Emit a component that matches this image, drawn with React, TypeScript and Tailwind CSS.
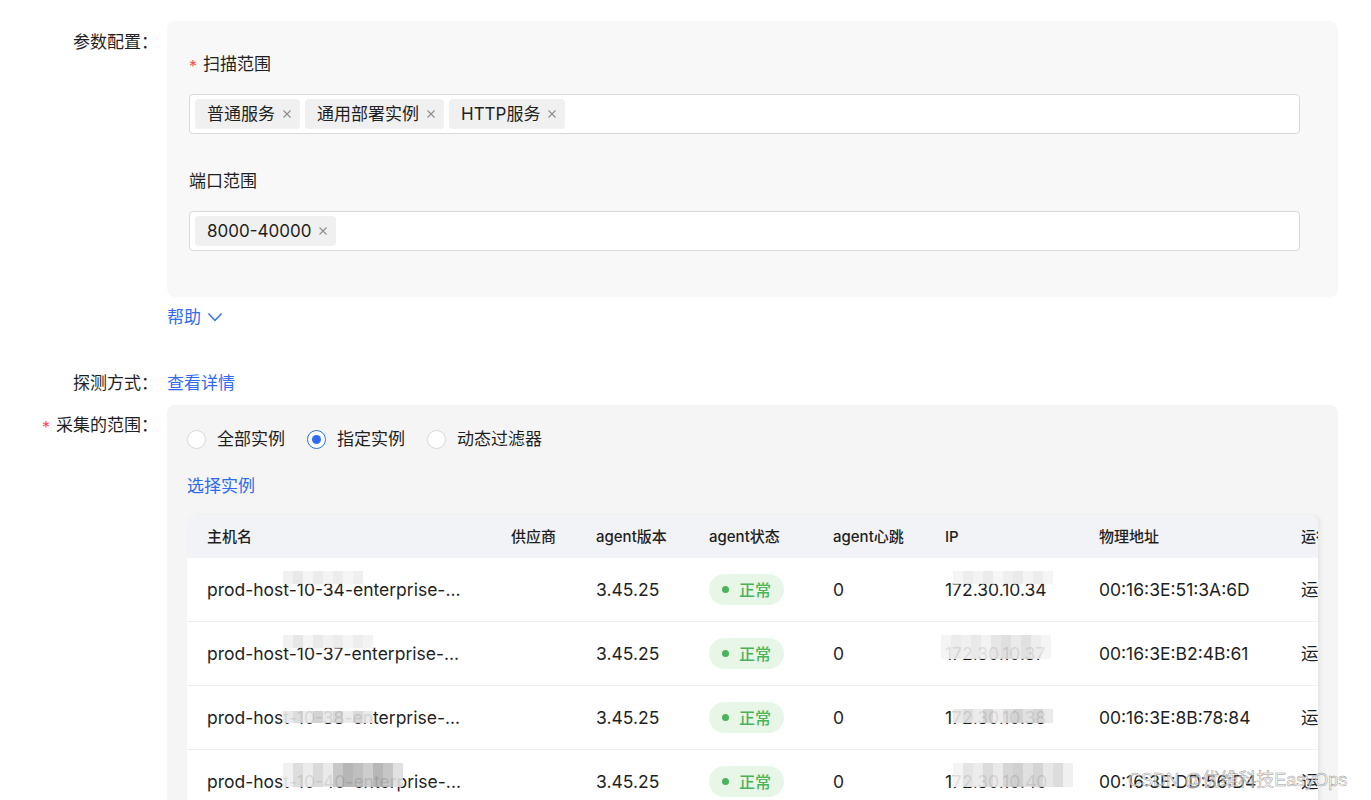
import { type ReactNode } from "react";

const FONT = "font-['Inter','Noto_Sans_CJK_SC',sans-serif]";

function Tag({ children }: { children: ReactNode }) {
  return (
    <span className="inline-flex h-[30px] items-center gap-[7px] rounded-[4px] bg-[#f0f0f0] pl-[12px] pr-[8px] text-[17px] text-[#1f1f1f]">
      {children}
      <svg width="10" height="10" viewBox="0 0 10 10" className="text-[#8c8c8c]">
        <path d="M1.5 1.5L8.5 8.5M8.5 1.5L1.5 8.5" stroke="currentColor" strokeWidth="1.1" />
      </svg>
    </span>
  );
}

function TagInput({ tags }: { tags: string[] }) {
  return (
    <div className="flex h-[40px] items-center gap-[5px] rounded-[4px] border border-[#d9d9d9] bg-white px-[5px]">
      {tags.map((t) => (
        <Tag key={t}>{t}</Tag>
      ))}
    </div>
  );
}

function Radio({ label, checked = false }: { label: string; checked?: boolean }) {
  return (
    <span className="inline-flex items-center gap-[11px] text-[17px] text-[#1f1f1f]">
      <span
        className={`flex h-[19px] w-[19px] items-center justify-center rounded-full border bg-white ${
          checked ? "border-[#2f6bf0]" : "border-[#d9d9d9]"
        }`}
      >
        {checked && <span className="h-[9px] w-[9px] rounded-full bg-[#2f6bf0]" />}
      </span>
      {label}
    </span>
  );
}

function Mosaic({ cells, className }: { cells: string[]; className: string }) {
  return (
    <span className={`absolute flex opacity-90 ${className}`}>
      {cells.map((c, i) => (
        <span key={i} className={`h-full w-[10px] ${c}`} />
      ))}
    </span>
  );
}

function Status() {
  return (
    <span className="inline-flex h-[31px] items-center gap-[10px] rounded-full bg-[#e8f6e8] px-[13px] text-[16px] font-medium text-[#4bb35a]">
      <span className="h-[7px] w-[7px] rounded-full bg-[#4bb35a]" />
      正常
    </span>
  );
}

const rows = [
  {
    host: "prod-host-10-34-enterprise-...",
    ip: "172.30.10.34",
    mac: "00:16:3E:51:3A:6D",
    hostCells: ["bg-[#f0f0f0]", "bg-[#e6e6e6]", "bg-[#f5f5f5]", "bg-[#eaeaea]", "bg-[#f3f3f3]", "bg-[#ececec]", "bg-[#f6f6f6]", "bg-[#eeeeee]"],
    hostPos: "left-[76px] top-[-8px] h-[13px]",
    ipCells: ["bg-[#f5f5f5]", "bg-[#ececec]", "bg-[#f2f2f2]", "bg-[#e9e9e9]", "bg-[#f6f6f6]", "bg-[#eeeeee]", "bg-[#e8e8e8]", "bg-[#f3f3f3]", "bg-[#ececec]", "bg-[#f4f4f4]"],
    ipPos: "left-[8px] top-[-8px] h-[13px]",
  },
  {
    host: "prod-host-10-37-enterprise-...",
    ip: "172.30.10.37",
    mac: "00:16:3E:B2:4B:61",
    hostCells: ["bg-[#f0f0f0]", "bg-[#e4e4e4]", "bg-[#f4f4f4]", "bg-[#e8e8e8]", "bg-[#f1f1f1]", "bg-[#eaeaea]", "bg-[#f5f5f5]", "bg-[#ececec]", "bg-[#f2f2f2]"],
    hostPos: "left-[76px] top-[-8px] h-[13px]",
    ipCells: ["bg-[#f3f3f3]", "bg-[#eaeaea]", "bg-[#efefef]", "bg-[#e7e7e7]", "bg-[#f2f2f2]", "bg-[#e4e4e4]", "bg-[#dcdcdc]", "bg-[#e8e8e8]", "bg-[#dedede]", "bg-[#ececec]", "bg-[#f4f4f4]"],
    ipPos: "left-[-4px] top-[-8px] h-[24px]",
  },
  {
    host: "prod-host-10-38-enterprise-...",
    ip: "172.30.10.38",
    mac: "00:16:3E:8B:78:84",
    hostCells: ["bg-[#e8e8e8]", "bg-[#dadada]", "bg-[#ebebeb]", "bg-[#cfcfcf]", "bg-[#e6e6e6]", "bg-[#d4d4d4]", "bg-[#eaeaea]", "bg-[#d6d6d6]", "bg-[#e8e8e8]"],
    hostPos: "left-[76px] top-[4px] h-[12px]",
    ipCells: ["bg-[#e8e8e8]", "bg-[#dcdcdc]", "bg-[#ebebeb]", "bg-[#d4d4d4]", "bg-[#ececec]", "bg-[#dadada]", "bg-[#cecece]", "bg-[#dfdfdf]", "bg-[#d2d2d2]", "bg-[#e8e8e8]"],
    ipPos: "left-[8px] top-[2px] h-[14px]",
  },
  {
    host: "prod-host-10-40-enterprise-...",
    ip: "172.30.10.40",
    mac: "00:16:3E:DD:56:D4",
    hostCells: ["bg-[#f0f0f0]", "bg-[#dadada]", "bg-[#ebebeb]", "bg-[#d6d6d6]", "bg-[#e8e8e8]", "bg-[#c2c2c2]", "bg-[#afafaf]", "bg-[#b9b9b9]", "bg-[#c8c8c8]", "bg-[#b0b0b0]", "bg-[#c0c0c0]", "bg-[#dedede]"],
    hostPos: "left-[76px] top-[-8px] h-[24px]",
    ipCells: ["bg-[#f3f3f3]", "bg-[#e2e2e2]", "bg-[#ebebeb]", "bg-[#d8d8d8]", "bg-[#e8e8e8]", "bg-[#d2d2d2]", "bg-[#cbcbcb]", "bg-[#dddddd]", "bg-[#d0d0d0]", "bg-[#e5e5e5]", "bg-[#dadada]", "bg-[#efefef]"],
    ipPos: "left-[8px] top-[-8px] h-[24px]",
  },
  {
    host: "prod-host-10-41-enterprise-...",
    ip: "172.30.10.41",
    mac: "00:16:3E:4A:19:C2",
    hostCells: ["bg-[#ebebeb]", "bg-[#e0e0e0]", "bg-[#e7e7e7]", "bg-[#dcdcdc]", "bg-[#e8e8e8]", "bg-[#e1e1e1]", "bg-[#ebebeb]", "bg-[#e4e4e4]"],
    hostPos: "left-[76px] top-[-6px] h-[18px]",
    ipCells: ["bg-[#ececec]", "bg-[#e1e1e1]", "bg-[#e8e8e8]", "bg-[#dcdcdc]", "bg-[#e6e6e6]", "bg-[#dddddd]", "bg-[#e9e9e9]", "bg-[#e2e2e2]", "bg-[#ebebeb]", "bg-[#e5e5e5]"],
    ipPos: "left-[8px] top-[-6px] h-[18px]",
  },
];

const cols = "grid grid-cols-[304px_85px_113px_124px_112px_154px_202px_120px]";

function HostTable() {
  return (
    <div className="relative w-[1131px] overflow-hidden rounded-t-[8px] shadow-[3px_0_5px_-1px_rgba(0,0,0,0.08)]">
      <div className="w-[1214px]">
        <div className={`${cols} h-[43px] items-center bg-[#f1f3f6] text-[15px] font-medium text-[#1f1f1f]`}>
          <div className="pl-[20px]">主机名</div>
          <div className="pl-[20px]">供应商</div>
          <div className="pl-[20px]">agent版本</div>
          <div className="pl-[20px]">agent状态</div>
          <div className="pl-[20px]">agent心跳</div>
          <div className="pl-[20px]">IP</div>
          <div className="pl-[20px]">物理地址</div>
          <div className="pl-[20px]">运行状态</div>
        </div>
        {rows.map((r) => (
          <div
            key={r.mac}
            className={`${cols} h-[64px] items-center border-b border-[#f0f0f0] bg-white text-[17.5px] text-[#1f1f1f]`}
          >
            <div className="relative pl-[20px]">
              <span className="relative">
                {r.host}
                <Mosaic cells={r.hostCells} className={r.hostPos} />
              </span>
            </div>
            <div />
            <div className="pl-[20px]">3.45.25</div>
            <div className="pl-[20px]">
              <Status />
            </div>
            <div className="pl-[20px]">0</div>
            <div className="pl-[20px]">
              <span className="relative">
                {r.ip}
                <Mosaic cells={r.ipCells} className={r.ipPos} />
              </span>
            </div>
            <div className="pl-[20px]">{r.mac}</div>
            <div className="pl-[20px]">运行中</div>
          </div>
        ))}
      </div>
    </div>
  );
}

export default function App() {
  return (
    <div className={`relative h-[800px] overflow-hidden bg-white ${FONT} text-[17px] leading-[24px] text-[#1f1f1f]`}>
      <div className="grid grid-cols-[158px_1fr] gap-x-[9px] pr-[33px] pt-[21px]">
        {/* 参数配置 */}
        <div className="pt-[9px] text-right">参数配置：</div>
        <div className="rounded-[8px] bg-[#f8f8f8] pl-[22px] pr-[38px] pb-[46px] pt-[31px]">
          <div className="flex h-[24px] items-center gap-[6px]">
            <span className="relative top-[2px] text-[16px] leading-[24px] text-[#ff4d4f]">*</span>
            <span>扫描范围</span>
          </div>
          <div className="mt-[18px]">
            <TagInput tags={["普通服务", "通用部署实例", "HTTP服务"]} />
          </div>
          <div className="mt-[35px]">端口范围</div>
          <div className="mt-[18px]">
            <TagInput tags={["8000-40000"]} />
          </div>
        </div>

        <div />
        <div className="mt-[8px] flex h-[24px] items-center gap-[6px] text-[#2f6bf0]">
          帮助
          <svg width="16" height="12" viewBox="0 0 16 12">
            <path d="M1.5 2.5L8 9.5L14.5 2.5" fill="none" stroke="currentColor" strokeWidth="1.4" />
          </svg>
        </div>

        {/* 探测方式 */}
        <div className="mt-[42px] text-right">探测方式：</div>
        <div className="mt-[42px] text-[#2f6bf0]">查看详情</div>

        {/* 采集的范围 */}
        <div className="mt-[10px] flex h-[32px] items-end justify-end gap-[6px]">
          <span className="relative top-[2px] text-[16px] leading-[24px] text-[#ff4d4f]">*</span>
          <span>采集的范围：</span>
        </div>
        <div className="mt-[10px] rounded-t-[8px] bg-[#f5f5f6] pl-[20px] pr-[20px] pt-[22px] pb-[40px]">
          <div className="flex h-[24px] items-center gap-[22px]">
            <Radio label="全部实例" />
            <Radio label="指定实例" checked />
            <Radio label="动态过滤器" />
          </div>
          <div className="mt-[23px] text-[#2f6bf0]">选择实例</div>
          <div className="mt-[17px]">
            <HostTable />
          </div>
        </div>
      </div>

      <div className="pointer-events-none absolute left-[1128px] top-[767px] whitespace-nowrap font-['Liberation_Sans','Noto_Sans_CJK_SC',sans-serif] text-[18px] leading-[26px] text-white/60 [-webkit-text-stroke:0.5px_#999]">
        CSDN @优维科技EasyOps
      </div>
    </div>
  );
}
